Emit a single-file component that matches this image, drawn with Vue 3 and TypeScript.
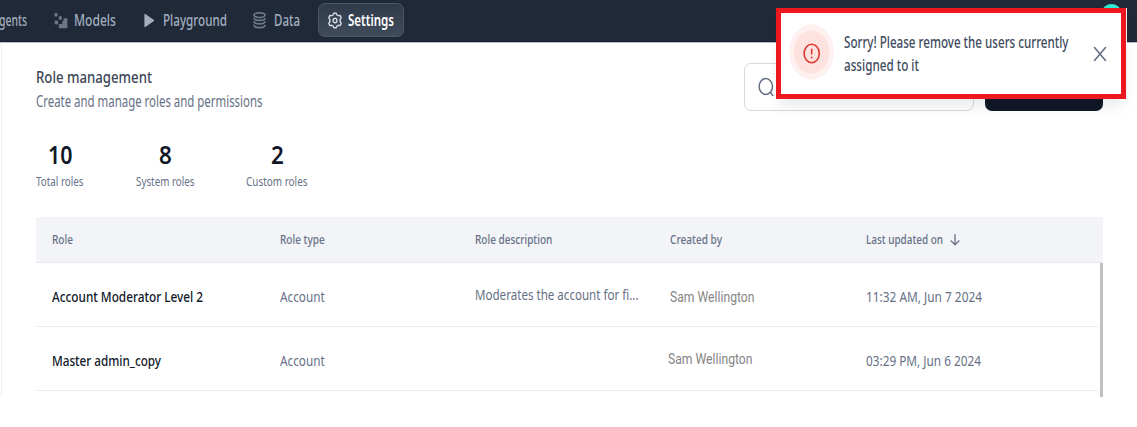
<script setup lang="ts">
interface Cell {
  text: string
  width: number
}

interface Row {
  name: Cell
  type: Cell
  description: Cell
  author: Cell
  updated: Cell
}

// Condenses or stretches a text run horizontally to a given width in pixels.
const vFit = {
  mounted(el: HTMLElement, binding: { value: number }) {
    const natural = el.getBoundingClientRect().width
    el.style.transform = `scaleX(${binding.value / natural})`
    el.style.marginRight = `${binding.value - natural}px`
  },
}

const stats = [
  { value: '10', valueWidth: 24.5, label: 'Total roles', width: 47.5, key: 'total' },
  { value: '8', valueWidth: 12.8, label: 'System roles', width: 58.5, key: 'system' },
  { value: '2', valueWidth: 12.8, label: 'Custom roles', width: 61.5, key: 'custom' },
]

const columns: Cell[] = [
  { text: 'Role', width: 21 },
  { text: 'Role type', width: 44.7 },
  { text: 'Role description', width: 77.3 },
  { text: 'Created by', width: 52 },
  { text: 'Last updated on', width: 77 },
]

const rows: Row[] = [
  {
    name: { text: 'Account Moderator Level 2', width: 151 },
    type: { text: 'Account', width: 44.7 },
    description: { text: 'Moderates the account for fi...', width: 163.5 },
    author: { text: 'Sam Wellington', width: 84.5 },
    updated: { text: '11:32 AM, Jun 7 2024', width: 116 },
  },
  {
    name: { text: 'Master admin_copy', width: 109 },
    type: { text: 'Account', width: 44.7 },
    description: { text: '', width: 0 },
    author: { text: 'Sam Wellington', width: 84.5 },
    updated: { text: '03:29 PM, Jun 6 2024', width: 115 },
  },
]
</script>

<template>
  <div class="app">
    <header class="topbar">
      <nav class="nav">
        <a class="item agents"><span v-fit="28" class="t">gents</span></a>
        <a class="item models">
          <svg class="icon" width="14" height="17" viewBox="0 0 14 17" fill="#6b7689">
            <ellipse cx="2" cy="2.8" rx="1.7" ry="2" />
            <ellipse cx="6.3" cy="5.9" rx="1.7" ry="2" />
            <ellipse cx="2.4" cy="10.4" rx="1.9" ry="2.2" />
            <path d="M10.2 6.2h2.6q.6 0 .6.6v8.6q0 .9-.7.9H5.6q-.8 0-.8-.9v-2.6q0-.8.8-.8h2.2q.5 0 .5-.6V9.6q0-.8.7-.8h.1q.5 0 .5-.6V7q0-.8.6-.8z" />
          </svg>
          <span v-fit="42" class="t">Models</span>
        </a>
        <a class="item playground">
          <svg class="icon" width="11" height="15" viewBox="0 0 11 15">
            <path d="M1 1.4v12.2L9.6 7.5z" fill="#a3adbd" stroke="#a3adbd" stroke-width="1.2" stroke-linejoin="round" />
          </svg>
          <span v-fit="64" class="t">Playground</span>
        </a>
        <a class="item data">
          <svg class="icon" width="13" height="17" viewBox="0 0 13 17" fill="none" stroke="#6f7a8d" stroke-width="1.7">
            <ellipse cx="6.5" cy="3.2" rx="5.5" ry="2.3" />
            <path d="M1 5.9c0 3.300 11 3.300 11 0M1 9.200c0 3.500 11 3.500 11 0M1 12.700c0 3.900 11 3.900 11 0" />
          </svg>
          <span v-fit="26" class="t">Data</span>
        </a>
        <a class="item settings">
          <svg class="icon" width="14" height="17" viewBox="0 0 14 17" fill="none" stroke="#d5dae2" stroke-width="1.400" stroke-linejoin="round">
            <path d="M5.800 1.200h2.400l.7 1.800 1.300.7 1.900-.3 1.100 2.400-1.100 1.700v2l1.100 1.700-1.100 2.400-1.900-.3-1.300.7-.7 1.800H5.800l-.7-1.800-1.300-.7-1.900.3-1.100-2.400 1.100-1.700v-2L.8 5.800l1.100-2.400 1.900.3 1.300-.7z" />
            <ellipse cx="7" cy="8.500" rx="1.900" ry="2.300" />
          </svg>
          <span v-fit="46" class="t">Settings</span>
        </a>
      </nav>
      <span class="avatar" />
    </header>

    <main class="page">
      <section class="intro">
        <div>
          <h1><span v-fit="116" class="t">Role management</span></h1>
          <p class="subtitle"><span v-fit="226.500" class="t">Create and manage roles and permissions</span></p>
        </div>
        <div class="actions">
          <div class="search">
            <svg width="16" height="20" viewBox="0 0 16 20" fill="none" stroke="#667085" stroke-width="1.500" stroke-linecap="round">
              <ellipse cx="7.800" cy="9.500" rx="6.700" ry="7.900" />
              <path d="M12.500 15.500l2.400 2.900" />
            </svg>
          </div>
          <div class="create" />
        </div>
      </section>

      <section class="stats">
        <div v-for="s in stats" :key="s.key" class="stat" :class="s.key">
          <strong><span v-fit="s.valueWidth" class="t">{{ s.value }}</span></strong>
          <small><span v-fit="s.width" class="t">{{ s.label }}</span></small>
        </div>
      </section>

      <section class="table">
        <div class="head grid">
          <div v-for="(c, i) in columns" :key="c.text" class="th">
            <span v-fit="c.width" class="t">{{ c.text }}</span>
            <svg v-if="i === 4" class="sort" width="10" height="12" viewBox="0 0 10 12" fill="none" stroke="#667085" stroke-width="1.300">
              <path d="M5 .3v10.500M.8 6.500L5 10.900l4.200-4.400" />
            </svg>
          </div>
        </div>
        <div class="body">
          <div class="rows">
            <div v-for="r in rows" :key="r.name.text" class="row grid">
              <div class="name"><span v-fit="r.name.width" class="t">{{ r.name.text }}</span></div>
              <div><span v-fit="r.type.width" class="t">{{ r.type.text }}</span></div>
              <div class="description"><span v-if="r.description.text" v-fit="r.description.width" class="t">{{ r.description.text }}</span></div>
              <div class="author"><span v-fit="r.author.width" class="t">{{ r.author.text }}</span></div>
              <div><span v-fit="r.updated.width" class="t">{{ r.updated.text }}</span></div>
            </div>
          </div>
          <div class="scrollbar" />
        </div>
      </section>
    </main>

    <aside class="toast">
      <svg class="alert" width="45" height="56" viewBox="0 0 45 56" fill="none">
        <ellipse cx="22.500" cy="28" rx="22.500" ry="27.700" fill="#fef1f0" />
        <ellipse cx="22.500" cy="28" rx="17.700" ry="21.500" fill="#fee2e0" />
        <ellipse cx="22.700" cy="29.500" rx="7.600" ry="9.200" stroke="#dc3a30" stroke-width="1.600" />
        <path d="M22.700 25.300v4.700" stroke="#dc3a30" stroke-width="1.500" stroke-linecap="round" />
        <ellipse cx="22.700" cy="33.500" rx=".9" ry="1" fill="#dc3a30" />
      </svg>
      <div class="message">
        <div><span v-fit="224.500" class="t">Sorry! Please remove the users currently</span></div>
        <div><span v-fit="75" class="t">assigned to it</span></div>
      </div>
      <svg class="close" width="14" height="16" viewBox="0 0 14 16" stroke="#667085" stroke-width="1.600" stroke-linecap="round">
        <path d="M1.500 1.500l11 13M12.500 1.500l-11 13" />
      </svg>
    </aside>
  </div>
</template>

<style>
body {
  margin: 0;
  background: #fff;
}
</style>

<style scoped>
.app {
  position: relative;
  width: 1137px;
  height: 427px;
  overflow: hidden;
  background: #fff;
  font-family: "Noto Sans", "Open Sans", sans-serif;
  font-size: 15px;
  color: #667085;
}
.t {
  display: inline-block;
  white-space: nowrap;
  transform-origin: 0 50%;
}
svg {
  display: block;
  flex: none;
}
.topbar {
  position: relative;
  box-sizing: border-box;
  height: 43px;
  background: #1f2937;
  border-bottom: 1px solid #b9bec7;
  box-shadow: inset 0 -1px #182130;
}
.nav {
  display: flex;
  height: 40px;
  align-items: center;
  margin-left: -1px;
  color: #a3aebf;
  font-size: 15.500px;
  font-weight: 500;
}
.item {
  display: flex;
  align-items: center;
  box-sizing: border-box;
  height: 34px;
  flex: none;
}
.agents { width: 55px; }
.models { width: 90px; gap: 6px; }
.playground { width: 109px; gap: 8px; }
.data { width: 64.500px; gap: 8px; }
.settings {
  width: 86px;
  gap: 6px;
  padding-left: 9px;
  border: 1px solid #4b5667;
  border-radius: 7px;
  background: linear-gradient(#303b4b, #3f4a5b);
  color: #fff;
  font-weight: 600;
}
.avatar {
  position: absolute;
  left: 1100px;
  top: 4px;
  width: 23px;
  height: 28px;
  border-radius: 50%;
  background: #2eead4;
}
.page {
  box-sizing: border-box;
  height: 354px;
  margin-left: 1px;
  padding: 20px 34px 0 34px;
  border-left: 1px solid #f0f1f3;
}
.intro {
  display: flex;
  justify-content: space-between;
  height: 68px;
}
h1 {
  margin: 2px 0 0;
  height: 24px;
  font-size: 15.500px;
  line-height: 24px;
  font-weight: 550;
  color: #3c4757;
}
.subtitle {
  margin: 0;
  font-size: 15.500px;
  line-height: 24px;
}
.actions {
  display: flex;
  gap: 11px;
}
.search {
  box-sizing: border-box;
  display: flex;
  align-items: center;
  width: 230.500px;
  height: 48px;
  padding-left: 13px;
  border: 1px solid #d5d9e1;
  border-radius: 7px;
}
.create {
  width: 118px;
  height: 48px;
  border-radius: 7px;
  background: #101828;
}
.stats {
  display: flex;
  height: 86px;
  padding-top: 5px;
  box-sizing: border-box;
}
.stat {
  display: flex;
  flex-direction: column;
  align-items: center;
}
.total { width: 48px; margin-right: 52px; }
.system { width: 58px; margin-right: 52px; }
.custom { width: 62px; }
.stat strong {
  font-size: 25.500px;
  line-height: 36px;
  font-weight: 650;
  color: #101828;
}
.stat small {
  margin-top: 2px;
  font-size: 12.500px;
  line-height: 16px;
}
.table {
  width: 1067px;
}
.grid {
  display: grid;
  grid-template-columns: 227.500px 195.500px 195px 196px 1fr;
  padding-left: 16px;
  box-sizing: border-box;
}
.head {
  height: 46px;
  background: #f2f4f8;
  border-bottom: 1px solid #e7e9ee;
  font-size: 12.500px;
  font-weight: 500;
}
.th {
  display: flex;
  align-items: center;
  gap: 7px;
}
.body {
  display: flex;
  justify-content: space-between;
  height: 134px;
}
.rows {
  width: 1062px;
}
.row {
  height: 64px;
  border-bottom: 1px solid #eaecf0;
  line-height: 22px;
  padding-top: 22px;
  font-size: 14.700px;
}
.name {
  color: #101828;
  font-weight: 500;
}
.description {
  margin-top: -2px;
}
.author {
  margin-top: 1px;
  font-family: Roboto, "Liberation Sans", sans-serif;
  color: #858585;
}
.row:nth-child(2) .author {
  margin: -1px 0 0 -2px;
}
.scrollbar {
  width: 3px;
  background: #c1c1c1;
}
.toast {
  position: absolute;
  left: 776px;
  top: 8px;
  box-sizing: border-box;
  display: flex;
  width: 350px;
  height: 91px;
  padding: 11px 14px 0 8px;
  border: 5px solid #ee161f;
  background: #fff;
  box-shadow: 1px 0 #eef0f2, 0 10px 14px -3px rgba(16, 24, 40, 0.09);
}
.message {
  flex: 1;
  margin: 7px 0 0 10px;
  font-size: 15.500px;
  line-height: 23px;
  font-weight: 500;
  color: #414c60;
}
.close {
  margin-top: 22px;
}
</style>
